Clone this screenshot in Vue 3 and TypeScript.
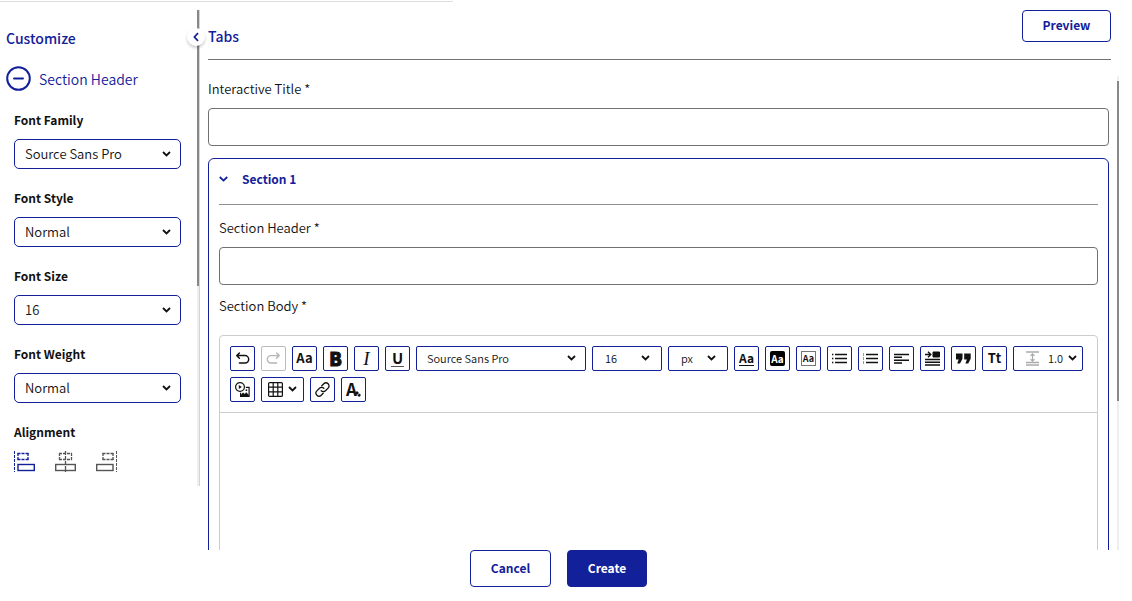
<script setup lang="ts">
import { ref } from 'vue'

interface Field {
  id: string
  label: string
  value: string
  options: string[]
}

const fields = ref<Field[]>([
  { id: 'font-family', label: 'Font Family', value: 'Source Sans Pro', options: ['Source Sans Pro', 'Arial', 'Georgia'] },
  { id: 'font-style', label: 'Font Style', value: 'Normal', options: ['Normal', 'Italic'] },
  { id: 'font-size', label: 'Font Size', value: '16', options: ['14', '16', '18'] },
  { id: 'font-weight', label: 'Font Weight', value: 'Normal', options: ['Normal', 'Bold'] },
])

const title = ref('')
const header = ref('')
const family = ref('Source Sans Pro')
const size = ref('16')
const unit = ref('px')
const spacing = ref('1.0')
const open = ref(true)
</script>

<template>
  <div class="page">
    <div class="topline"></div>
    <div class="body">
      <aside class="sidebar">
        <div class="panel">
          <h2 class="panel-title">Customize</h2>
          <button class="group" type="button">
            <svg width="25" height="25" viewBox="0 0 25 25" fill="none" stroke="#12209a" stroke-width="2">
              <circle cx="12.5" cy="12.5" r="11.3" />
              <path d="M8 12.5h9" stroke-linecap="round" />
            </svg>
            <span>Section Header</span>
          </button>
          <div v-for="f in fields" :key="f.id" class="field">
            <label :for="f.id">{{ f.label }}</label>
            <div class="pick">
              <select :id="f.id" v-model="f.value">
                <option v-for="o in f.options" :key="o">{{ o }}</option>
              </select>
              <svg class="chev" width="9" height="6" viewBox="0 0 9 6"><path d="M1 1l3.5 3.5L8 1" /></svg>
            </div>
          </div>
          <div class="field">
            <span class="field-label">Alignment</span>
            <div class="aligns">
              <button type="button" class="align active" aria-label="Align left">
                <svg width="21" height="21" viewBox="0 0 21 21" fill="none" stroke="currentColor">
                  <path d="M.5 0v21" stroke-dasharray="3 1" />
                  <path d="M3.5 2.5H14.5M3.5 8.5H14.5" stroke-width="1.3" stroke-dasharray="3 1" /><path d="M4 2v7M14 2v7" stroke-width="1.3" stroke-dasharray="3 1" />
                  <rect x="4" y="13.5" width="16.3" height="6" stroke-width="1.4" />
                </svg>
              </button>
              <button type="button" class="align" aria-label="Align center">
                <svg width="21" height="21" viewBox="0 0 21 21" fill="none" stroke="currentColor">
                  <path d="M10.5 0v21" stroke-width="1.3" stroke-dasharray="4 1" />
                  <path d="M4 2.5H17M4 8.5H17" stroke-width="1.3" stroke-dasharray="3 1" /><path d="M4.5 2v7M16.5 2v7" stroke-width="1.3" stroke-dasharray="3 1" />
                  <rect x=".7" y="13.5" width="19.6" height="6" stroke-width="1.4" />
                </svg>
              </button>
              <button type="button" class="align" aria-label="Align right">
                <svg width="21" height="21" viewBox="0 0 21 21" fill="none" stroke="currentColor">
                  <path d="M20.5 0v21" stroke-dasharray="3 1" />
                  <path d="M6.5 2.5H17.5M6.5 8.5H17.5" stroke-width="1.3" stroke-dasharray="3 1" /><path d="M7 2v7M17 2v7" stroke-width="1.3" stroke-dasharray="3 1" />
                  <rect x=".7" y="13.5" width="16.3" height="6" stroke-width="1.4" />
                </svg>
              </button>
            </div>
          </div>
        </div>
        <div class="track"><div class="thumb"></div></div>
        <button class="collapse" type="button" aria-label="Collapse panel">
          <svg width="6" height="10" viewBox="0 0 6 10" fill="none" stroke="#12209a" stroke-width="1.7"><path d="M5 1.2L1.4 5 5 8.8" /></svg>
        </button>
      </aside>

      <main class="main">
        <header class="head">
          <h1>Tabs</h1>
          <button type="button" class="btn preview">Preview</button>
        </header>
        <div class="scroll">
          <div class="content">
            <label class="lbl" for="title">Interactive Title *</label>
            <input id="title" v-model="title" class="box" type="text" />
            <section class="card">
              <button class="card-head" type="button" @click="open = !open">
                <svg width="9" height="6" viewBox="0 0 9 6" fill="none" stroke="#12209a" stroke-width="1.8"><path d="M.8 1l3.7 3.6L8.2 1" /></svg>
                <span>Section 1</span>
              </button>
              <label class="lbl" for="header">Section Header *</label>
              <input id="header" v-model="header" class="box" type="text" />
              <label class="lbl body-lbl" for="editor">Section Body *</label>
              <div class="editor">
                <div class="toolbar">
                  <button type="button" class="tool" aria-label="Undo">
                    <svg width="15" height="15" viewBox="0 0 15 15" fill="none" stroke="#111" stroke-width="1.5" stroke-linecap="round" stroke-linejoin="round">
                      <path d="M4.4 2L1.8 4.6l2.6 2.6M2 4.6h8a3.7 3.7 0 0 1 0 7.4H4.4" />
                    </svg>
                  </button>
                  <button type="button" class="tool off" aria-label="Redo">
                    <svg width="15" height="15" viewBox="0 0 15 15" fill="none" stroke="#b4b4b4" stroke-width="1.4" stroke-linecap="round" stroke-linejoin="round">
                      <path d="M10.6 2l2.6 2.6-2.6 2.6M13 4.6H5a3.7 3.7 0 0 0 0 7.4h5.6" />
                    </svg>
                  </button>
                  <button type="button" class="tool caps">Aa</button>
                  <button type="button" class="tool bold">B</button>
                  <button type="button" class="tool italic">I</button>
                  <button type="button" class="tool under"><span>U</span></button>
                  <div class="pick t-family">
                    <select v-model="family" aria-label="Font family"><option>Source Sans Pro</option><option>Arial</option></select>
                    <svg class="chev" width="9" height="6" viewBox="0 0 9 6"><path d="M1 1l3.5 3.5L8 1" /></svg>
                  </div>
                  <div class="pick t-size">
                    <select v-model="size" aria-label="Font size"><option>16</option><option>18</option></select>
                    <svg class="chev" width="9" height="6" viewBox="0 0 9 6"><path d="M1 1l3.5 3.5L8 1" /></svg>
                  </div>
                  <div class="pick t-unit">
                    <select v-model="unit" aria-label="Unit"><option>px</option><option>pt</option></select>
                    <svg class="chev" width="9" height="6" viewBox="0 0 9 6"><path d="M1 1l3.5 3.5L8 1" /></svg>
                  </div>
                  <button type="button" class="tool color"><span>Aa</span></button>
                  <button type="button" class="tool fill"><span>Aa</span></button>
                  <button type="button" class="tool frame"><span>Aa</span></button>
                  <button type="button" class="tool" aria-label="Bulleted list">
                    <svg width="15" height="11" viewBox="0 0 15 11" fill="none" stroke="#111" stroke-width="1.5">
                      <path d="M3 1.5h12M3 5.5h12M3 9.5h12" /><path d="M0 1.5h1.4M0 5.5h1.4M0 9.5h1.4" />
                    </svg>
                  </button>
                  <button type="button" class="tool" aria-label="Numbered list">
                    <svg width="15" height="11" viewBox="0 0 15 11" fill="none" stroke="#111" stroke-width="1.4">
                      <path d="M3 1.5h12M3 5.5h12M3 9.5h12" /><path d="M.5 0v3M.5 4v3M.5 8v3" stroke="#999" stroke-width="1" />
                    </svg>
                  </button>
                  <button type="button" class="tool" aria-label="Align text">
                    <svg width="15" height="11" viewBox="0 0 15 11" fill="none" stroke="#111" stroke-width="1.4">
                      <path d="M0 1.5h15M0 4.3h8M0 7.2h15M0 10h8" />
                    </svg>
                  </button>
                  <button type="button" class="tool" aria-label="Indent">
                    <svg width="15" height="15" viewBox="0 0 15 15" fill="none" stroke="#111">
                      <path d="M0 3.5h5.5M3 .7l2.8 2.8L3 6.3" stroke-width="1.4" />
                      <path d="M8 1h6.5v5H8z" fill="#111" />
                      <path d="M0 8.5h15M0 11.2h15M0 14h15" stroke-width="1.5" />
                    </svg>
                  </button>
                  <button type="button" class="tool" aria-label="Quote">
                    <svg width="15" height="11" viewBox="0 0 15 11" fill="#111">
                      <path d="M0 .5h6.5v5.2L4 10.5H1.2l1.5-4H0zM8.2.5h6.5v5.2l-2.5 4.8H9.4l1.5-4H8.2z" />
                    </svg>
                  </button>
                  <button type="button" class="tool tt">Tt</button>
                  <div class="pick t-space">
                    <svg class="lead" width="14" height="15" viewBox="0 0 14 15" fill="none" stroke="#aaa">
                      <path d="M0 1h13M0 11.5h13M0 14h13" stroke-width="1.4" />
                      <path d="M6.5 3v7M4.5 4.8l2-2 2 2M4.5 8.2l2 2 2-2" stroke-width="1.2" />
                    </svg>
                    <select v-model="spacing" aria-label="Line spacing"><option>1.0</option><option>1.5</option></select>
                    <svg class="chev" width="9" height="6" viewBox="0 0 9 6"><path d="M1 1l3.5 3.5L8 1" /></svg>
                  </div>
                  <button type="button" class="tool" aria-label="Insert media">
                    <svg width="15" height="15" viewBox="0 0 15 15" fill="none" stroke="#111" stroke-width="1.2">
                      <circle cx="5" cy="5" r="4.4" /><path d="M3.8 3v4l3-2z" fill="#111" stroke="none" />
                      <path d="M10.8 5.3h3.3v9H5.6v-3.6" />
                      <path d="M6 14.3v-1.6l2-2.2 1.6 1.4 1.6-1.6 2.6 2.6v1.4z" fill="#111" stroke="none" />
                      <circle cx="11.4" cy="8.2" r=".9" fill="#111" stroke="none" />
                    </svg>
                  </button>
                  <button type="button" class="tool table-tool" aria-label="Insert table">
                    <svg width="15" height="15" viewBox="0 0 15 15" fill="none" stroke="#111" stroke-width="1.2">
                      <rect x=".6" y=".6" width="13.8" height="13.8" rx="1" />
                      <path d="M.6 5.2h13.8M.6 9.8h13.8M5.2.6v13.8M9.8.6v13.8" />
                    </svg>
                    <svg class="chev" width="9" height="6" viewBox="0 0 9 6"><path d="M1 1l3.5 3.5L8 1" /></svg>
                  </button>
                  <button type="button" class="tool" aria-label="Insert link">
                    <svg width="15" height="15" viewBox="0 0 15 15" fill="none" stroke="#111" stroke-width="1.3" stroke-linecap="round">
                      <path d="M6.8 3.8l2-2a3 3 0 0 1 4.3 4.3l-2.6 2.6a3 3 0 0 1-4.3 0" />
                      <path d="M8.2 11.2l-2 2a3 3 0 0 1-4.3-4.3l2.6-2.6a3 3 0 0 1 4.3 0" />
                    </svg>
                  </button>
                  <button type="button" class="tool clear" aria-label="Clear formatting">
                    <span>A</span>
                    <svg width="6" height="6" viewBox="0 0 6 6" fill="#111"><path d="M0 2L2 0l2 2-2 2zM2.4 4.4l2-2L6 4 4.2 6z" /></svg>
                  </button>
                </div>
                <textarea id="editor" class="area"></textarea>
              </div>
            </section>
          </div>
          <div class="main-track"><div class="main-thumb"></div></div>
        </div>
      </main>
    </div>
    <footer class="foot">
      <button type="button" class="btn cancel">Cancel</button>
      <button type="button" class="btn create">Create</button>
    </footer>
  </div>
</template>

<style>
body {
  background: #fff;
}
</style>

<style scoped>
.page,
.page * {
  box-sizing: border-box;
}
.page {
  display: flex;
  flex-direction: column;
  height: 100vh;
  padding-bottom: 14px;
  font-family: "Noto Sans CJK JP", "Noto Sans", sans-serif;
  font-size: 13px;
  font-weight: 350;
  line-height: 20px;
  color: #111;
}
button,
select,
input,
textarea {
  font: inherit;
  color: inherit;
  margin: 0;
  padding: 0;
  background: none;
  border: 0;
}
svg {
  display: block;
  flex: none;
}
h1,
h2 {
  margin: 0;
  font-size: 14px;
  font-weight: 500;
  line-height: 20px;
  color: #12209a;
}
.topline {
  width: 40%;
  height: 2px;
  border-bottom: 1px solid #ddd;
}
.body {
  display: flex;
  flex: 1;
  min-height: 0;
  padding-top: 8px;
}
.sidebar {
  position: relative;
  display: flex;
  flex: none;
  width: 200px;
  margin-bottom: 64px;
}
.panel {
  flex: 1;
  padding: 18px 16px 0 6px;
}
.group {
  display: flex;
  align-items: center;
  gap: 8px;
  margin-top: 18px;
  font-size: 14px;
  color: #12209a;
}
.field {
  display: flex;
  flex-direction: column;
  gap: 10px;
  margin: 20px 0 0 8px;
}
.field label,
.field-label {
  font-size: 12px;
  font-weight: 700;
  line-height: 18px;
}
.pick {
  display: grid;
  align-items: center;
  border: 1px solid #12209a;
  border-radius: 2px;
}
.pick > * {
  grid-area: 1 / 1;
}
.pick select {
  appearance: none;
  width: 100%;
  height: 100%;
  padding: 0 10px;
}
.chev {
  justify-self: end;
  margin-right: 9px;
  fill: none;
  stroke: #111;
  stroke-width: 1.8;
  pointer-events: none;
}
.field .pick {
  height: 30px;
  border-radius: 5px;
}
.aligns {
  display: flex;
  gap: 20px;
}
.align {
  color: #555;
}
.align.active {
  color: #12209a;
}
.track {
  width: 3px;
  background: #eee;
  border-right: 1px solid #d3d3e6;
}
.thumb {
  width: 2px;
  height: 58%;
  background: #888;
}
.collapse {
  position: absolute;
  top: 18px;
  right: -5px;
  display: flex;
  align-items: center;
  justify-content: center;
  width: 18px;
  height: 18px;
  border-radius: 50%;
  background: #fff;
  box-shadow: 0 2px 3px rgba(0, 0, 0, 0.2);
}
.main {
  display: flex;
  flex: 1;
  flex-direction: column;
  min-width: 0;
  padding: 0 13px 0 8px;
}
.head {
  display: flex;
  align-items: flex-start;
  justify-content: space-between;
  flex: none;
  height: 50px;
  margin-right: 8px;
  border-bottom: 1px solid #707070;
}
.head h1 {
  padding-top: 16px;
}
.btn {
  padding-bottom: 2px;
  border: 1px solid #12209a;
  border-radius: 4px;
  font-size: 12px;
  font-weight: 700;
  color: #12209a;
}
.preview {
  width: 89px;
  height: 32px;
}
.scroll {
  display: flex;
  flex: 1;
  gap: 8px;
  min-height: 0;
  margin-top: 16px;
}
.content {
  display: flex;
  flex: 1;
  flex-direction: column;
  min-width: 0;
  padding-top: 3px;
  overflow: hidden;
}
.main-track {
  width: 2px;
  padding-top: 5px;
  background: #eee;
}
.main-thumb {
  height: 320px;
  background: #888;
}
.lbl {
  display: block;
  margin-bottom: 9px;
}
.box {
  display: block;
  flex: none;
  width: 100%;
  height: 38px;
  padding: 0 10px;
  border: 1px solid #707070;
  border-radius: 4px;
}
.card {
  flex: none;
  margin-top: 12px;
  padding: 0 10px 10px;
  border: 1px solid #12209a;
  border-radius: 6px;
}
.card-head {
  display: flex;
  align-items: center;
  gap: 14px;
  width: 100%;
  height: 46px;
  margin-bottom: 13px;
  padding-bottom: 6px;
  border-bottom: 1px solid #909090;
  font-size: 12px;
  font-weight: 700;
  color: #12209a;
}
.body-lbl {
  margin: 11px 0 19px;
}
.editor {
  border: 1px solid #ccc;
  border-radius: 4px;
}
.toolbar {
  display: flex;
  flex-wrap: wrap;
  gap: 6px;
  padding: 10px;
  border-bottom: 1px solid #ccc;
  font-size: 11px;
}
.toolbar .pick {
  height: 25px;
}
.toolbar select {
  padding-bottom: 2px;
}
.toolbar .chev {
  margin-bottom: 1px;
}
.tool {
  display: flex;
  align-items: center;
  justify-content: center;
  width: 25px;
  height: 25px;
  border: 1px solid #12209a;
  border-radius: 2px;
  font-weight: 700;
  line-height: 16px;
  color: #111;
}
.off {
  border-color: #bbb;
}
.caps,
.tt {
  font-size: 13px;
  padding-bottom: 1px;
}
.bold {
  padding-bottom: 2px;
  font-size: 18px;
  font-weight: 900;
  -webkit-text-stroke: 1px #111;
}
.italic {
  font-family: "Liberation Serif", serif;
  font-size: 19px;
  font-style: italic;
  font-weight: 400;
}
.under {
  font-size: 15px;
}
.under span {
  width: 13px;
  border-bottom: 1px solid #555;
}
.color {
  font-size: 12px;
}
.color span {
  line-height: 14px;
  border-bottom: 1px solid #111;
}
.fill span,
.frame span {
  width: 15px;
  height: 15px;
  border-radius: 2px;
  font-size: 10px;
  line-height: 15px;
  text-align: center;
}
.fill span {
  background: #000;
  color: #fff;
}
.frame span {
  border: 1px solid #777;
  border-radius: 0;
  font-size: 9px;
  line-height: 13px;
}
.t-family {
  width: 170px;
}
.t-size {
  width: 70px;
}
.t-unit {
  width: 60px;
}
.toolbar .t-size select,
.toolbar .t-unit select {
  padding-left: 12px;
}
.t-size .chev,
.t-unit .chev {
  margin-right: 11px;
}
.t-space {
  width: 70px;
}
.toolbar .t-space select {
  padding-left: 34px;
}
.t-space .chev {
  margin-right: 5px;
}
.lead {
  margin-left: 12px;
}
.table-tool {
  gap: 5px;
  width: 43px;
}
.table-tool .chev {
  margin-right: 0;
}
.clear {
  padding-bottom: 1px;
  font-size: 17px;
}
.clear svg {
  align-self: flex-end;
  margin: 0 0 3px -2px;
}
.area {
  display: block;
  width: 100%;
  height: 200px;
  resize: none;
}
.foot {
  display: flex;
  flex: none;
  justify-content: center;
  gap: 16px;
  padding-right: 15px;
}
.cancel {
  width: 81px;
  height: 37px;
}
.create {
  width: 80px;
  height: 37px;
  background: #12209a;
  color: #fff;
}
</style>
